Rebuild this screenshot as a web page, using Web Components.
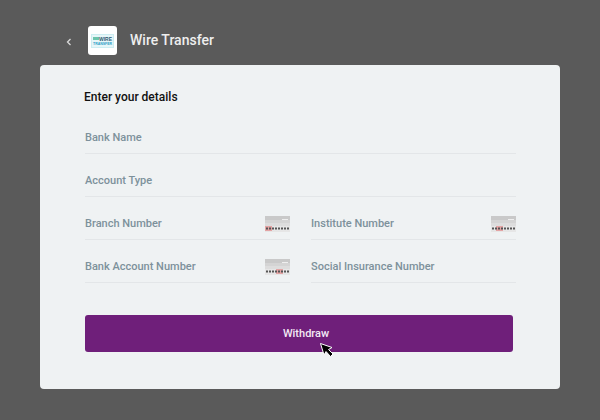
<!DOCTYPE html>
<html>
<head>
<meta charset="utf-8">
<title>Wire Transfer</title>
<style>
  html, body { margin: 0; height: 100%; }
  body { background: #5a5a5a; font-family: Roboto, "Liberation Sans", sans-serif; overflow: hidden; }
</style>
</head>
<body>
<withdraw-page>
  <wire-logo slot="logo"></wire-logo>
  <span slot="title">Wire Transfer</span>
  <span slot="heading">Enter your details</span>
  <text-field slot="fields" class="wide" label="Bank Name"></text-field>
  <text-field slot="fields" class="wide" label="Account Type"></text-field>
  <text-field slot="fields" label="Branch Number" mark="0"></text-field>
  <text-field slot="fields" label="Institute Number" mark="5"></text-field>
  <text-field slot="fields" label="Bank Account Number" mark="11"></text-field>
  <text-field slot="fields" label="Social Insurance Number"></text-field>
  <submit-button slot="action">Withdraw</submit-button>
</withdraw-page>

<script>
class WithdrawPage extends HTMLElement {
  constructor() {
    super();
    this.shadow = this.attachShadow({ mode: 'open' });
  }

  connectedCallback() {
    this.shadow.innerHTML = `
    <style>
      :host { display: block; padding: 26px 40px 0; }
      .top { display: flex; align-items: center; height: 29px; margin-bottom: 10px; }
      .back { width: 48px; padding: 2px 0 0 26px; box-sizing: border-box; display: flex; }
      .title { margin-left: 13px; font-size: 14px; font-weight: 500; color: #eeeeee; position: relative; top: -1px; }
      .card { background: #eff2f3; border-radius: 4px; height: 324px; box-sizing: border-box; padding: 25px 44px 0 45px; }
      .heading { font-size: 12px; font-weight: 500; color: #111; line-height: 14px; margin-left: -1px; }
      .fields { display: grid; grid-template-columns: 205px 205px; column-gap: 21px; margin-top: 8px; }
      ::slotted(.wide) { grid-column: 1 / 3; }
      .action { margin-top: 31px; margin-right: 3px; }
    </style>
    <div class="top">
      <div class="back">
        <svg width="6" height="8" viewBox="0 0 6 8"><path d="M4.5 1 L1.5 4 L4.5 7" fill="none" stroke="#d8d8d8" stroke-width="1.3"/></svg>
      </div>
      <slot name="logo"></slot>
      <div class="title"><slot name="title"></slot></div>
    </div>
    <div class="card">
      <div class="heading"><slot name="heading"></slot></div>
      <div class="fields"><slot name="fields"></slot></div>
      <div class="action"><slot name="action"></slot></div>
    </div>
    `;
  }
}

class WireLogo extends HTMLElement {
  constructor() {
    super();
    this.attachShadow({ mode: 'open' }).innerHTML = `
    <style>
      :host { display: flex; width: 29px; height: 29px; background: #fff; border-radius: 3px; align-items: center; justify-content: center; }
      text { font-family: "Liberation Sans", sans-serif; font-weight: 700; }
    </style>
    <svg width="23" height="14" viewBox="0 0 23 14">
      <rect x=".5" y=".5" width="22" height="13" fill="#e6f6f8" stroke="#cdeef2"/>
      <rect x="2" y="3" width="6" height="3" fill="#6cc4ac"/>
      <text x="8" y="6.5" font-size="5" fill="#2f5a72" textLength="13" lengthAdjust="spacingAndGlyphs">WIRE</text>
      <text x="2" y="10.5" font-size="4" fill="#2c9ec6" textLength="19" lengthAdjust="spacingAndGlyphs">TRANSFER</text>
    </svg>
    `;
  }
}

class TextField extends HTMLElement {
  constructor() {
    super();
    this.shadow = this.attachShadow({ mode: 'open' });
  }

  connectedCallback() {
    const mark = this.getAttribute('mark');
    this.shadow.innerHTML = `
    <style>
      :host { display: flex; align-items: center; justify-content: space-between; height: 42px; margin-bottom: 1px; padding-top: 10px; box-sizing: border-box; border-bottom: 1px solid #e3e6e8; font-size: 11px; font-weight: 500; color: #7d919b; }
      svg { display: block; margin-top: 1px; }
    </style>
    <span>${this.getAttribute('label')}</span>
    ${mark !== null ? `<svg width="25" height="16" viewBox="0 0 25 16">
      <rect width="25" height="16" fill="#e6e6e6"/>
      <rect width="25" height="4" fill="#c9c9c9"/>
      <rect y="4" width="25" height="3" fill="#d4d4d4"/>
      <rect y="7" width="25" height="3" fill="#dddddd"/>
      <rect x="17" y="3" width="6" height="1" fill="#efefef"/>
      <rect x="${mark}" y="10" width="7" height="5" fill="#e3a4a4"/>
      <path d="M1 12.5 H24" stroke="#555" stroke-width="2" stroke-dasharray="2 1" fill="none"/>
    </svg>` : ''}
    `;
  }
}

class SubmitButton extends HTMLElement {
  constructor() {
    super();
    this.attachShadow({ mode: 'open' }).innerHTML = `
    <style>
      :host { display: block; position: relative; }
      button { display: block; width: 100%; height: 37px; padding: 0 0 0 14px; border: 0; border-radius: 3px; background: #6f1f7a; color: #f3e9f5; font: 500 11px Roboto, "Liberation Sans", sans-serif; }
      svg { position: absolute; left: 234px; top: 27px; }
    </style>
    <button><slot></slot></button>
    <svg width="16" height="16" viewBox="0 0 16 16"><path d="M1.5 1.5 L5 13 L7 9.5 L11.5 14.5 L14 12 L9.5 7.5 L13 5.5 Z" fill="#000" stroke="#fff" stroke-width="1"/></svg>
    `;
  }
}

customElements.define('withdraw-page', WithdrawPage);
customElements.define('wire-logo', WireLogo);
customElements.define('text-field', TextField);
customElements.define('submit-button', SubmitButton);
</script>
</body>
</html>
